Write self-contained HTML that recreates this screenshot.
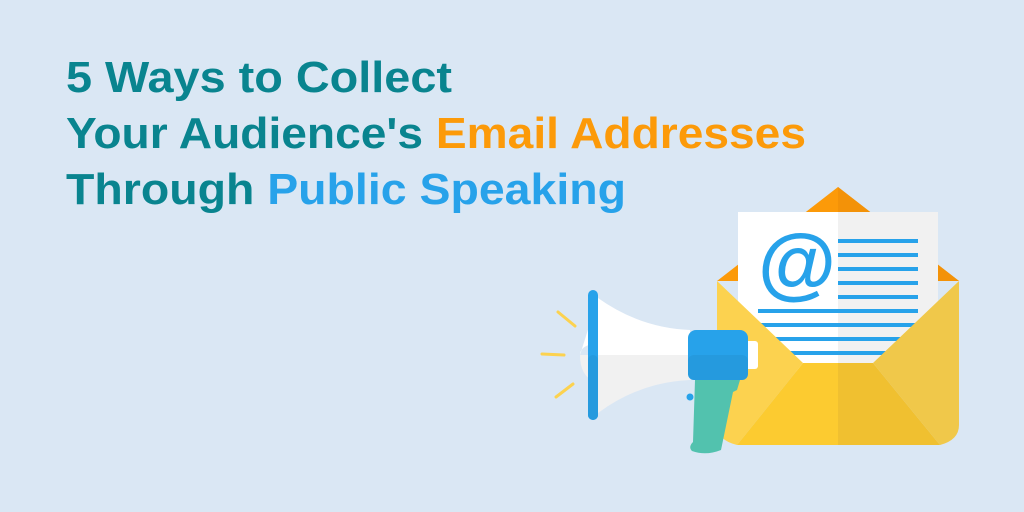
<!DOCTYPE html>
<html><head><meta charset="utf-8"><style>
html,body{margin:0;padding:0;width:1024px;height:512px;overflow:hidden;background:#dae7f4}
svg{display:block}
</style></head><body>
<svg width="1024" height="512" viewBox="0 0 1024 512" xmlns="http://www.w3.org/2000/svg">
<rect width="1024" height="512" fill="#dae7f4"/>
<g font-family="Liberation Sans, Arial, sans-serif" font-weight="bold" font-size="44">
<text x="66" y="92" fill="#09848f" textLength="386" lengthAdjust="spacingAndGlyphs">5 Ways to Collect</text>
<text x="66" y="148" textLength="740" lengthAdjust="spacingAndGlyphs"><tspan fill="#09848f">Your Audience's </tspan><tspan fill="#fc9a09">Email Addresses</tspan></text>
<text x="66" y="204" textLength="560" lengthAdjust="spacingAndGlyphs"><tspan fill="#09848f">Through </tspan><tspan fill="#27a2ea">Public Speaking</tspan></text>
</g>
<!-- envelope -->
<polygon points="717,281 838,187 959,281" fill="#fc9a09"/>
<polygon points="838,187 959,281 838,281" fill="#f39208"/>
<rect x="738" y="212" width="100" height="160" fill="#ffffff"/>
<rect x="838" y="212" width="100" height="160" fill="#f1f1f1"/>
<text x="797" y="290" text-anchor="middle" font-family="Liberation Sans, Arial, sans-serif" font-weight="bold" font-size="80" fill="#27a2ea">@</text>
<g fill="#27a2ea">
<rect x="838" y="239" width="80" height="4"/>
<rect x="838" y="253" width="80" height="4"/>
<rect x="838" y="267" width="80" height="4"/>
<rect x="838" y="281" width="80" height="4"/>
<rect x="838" y="295" width="80" height="4"/>
<rect x="758" y="309" width="160" height="4"/>
<rect x="758" y="323" width="160" height="4"/>
<rect x="758" y="337" width="160" height="4"/>
<rect x="758" y="351" width="160" height="4"/>
</g>
<path d="M717,281 L803,363 L737,445 Q717,440 717,425 Z" fill="#fcd24f"/>
<path d="M959,281 L873,363 L940,445 Q959,440 959,425 Z" fill="#f0c84a"/>
<polygon points="803,363 838,363 838,445 737,445" fill="#fccb30"/>
<polygon points="838,363 873,363 940,445 838,445" fill="#f0c030"/>
<!-- megaphone -->
<g stroke="#fcd24f" stroke-width="3" stroke-linecap="round">
<line x1="558" y1="312" x2="575" y2="326"/>
<line x1="542" y1="354" x2="564" y2="355"/>
<line x1="556" y1="397" x2="573" y2="384"/>
</g>
<path d="M598,298 Q640,328 690,330 L690,355 L598,355 L598,343 Q580,345 580,355 Z" fill="#ffffff"/>
<path d="M598,355 L690,355 L690,380 Q640,382 598,413 L598,383 Q580,378 580,355 Z" fill="#f1f1f1"/>
<rect x="588" y="290" width="10" height="130" rx="5" fill="#27a2ea"/>
<rect x="588" y="355" width="10" height="65" rx="5" fill="#259ade"/>
<rect x="744" y="341" width="14" height="28" rx="3" fill="#ffffff"/>
<circle cx="690" cy="397" r="3.5" fill="#27a2ea"/>
<path d="M695,380 L740,380 L737,390 L733,392 L721,450 Q706,456 692,451 Q688,447 693,442 Z" fill="#52c2ae"/>
<rect x="688" y="330" width="60" height="50" rx="8" fill="#27a2ea"/>
<rect x="688" y="355" width="60" height="25" rx="6" fill="#259ade"/>
</svg>
</body></html>
